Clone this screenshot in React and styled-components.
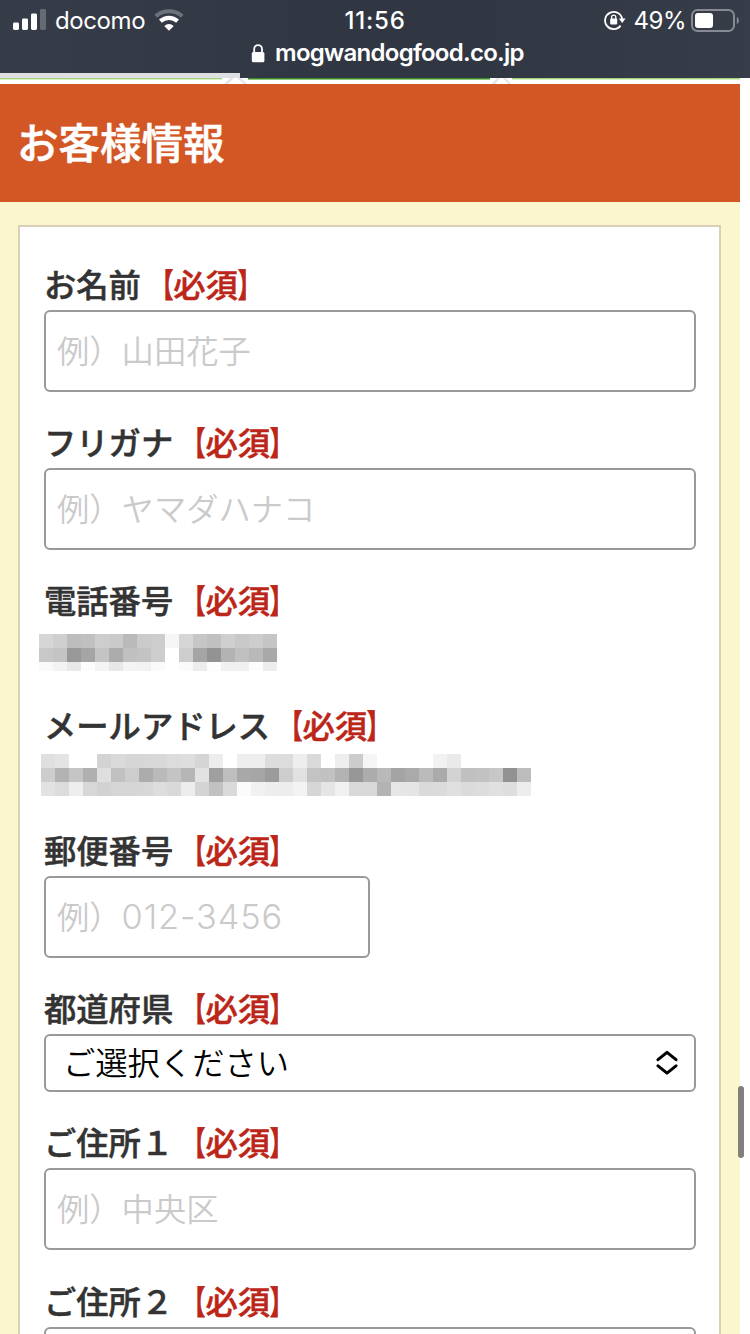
import React from "react";
import styled, { createGlobalStyle } from "styled-components";

const GlobalStyle = createGlobalStyle`
  * { box-sizing: border-box; }
  html, body { margin: 0; background: #fff; }
  body {
    width: 750px;
    height: 1334px;
    overflow: hidden;
    font-family: "Noto Sans CJK JP", sans-serif;
    color: #333;
  }
`;

const Screen = styled.div`
  position: relative;
  width: 750px;
  height: 1334px;
  overflow: hidden;
  background: #fff;
`;

const BrowserBar = styled.header`
  height: 78px;
  display: flex;
  flex-direction: column;
  background: linear-gradient(90deg, #363c48 0%, #303743 45%, #303743 60%, #363c48 100%);
  color: #fff;
  font-family: Inter, sans-serif;
`;

const StatusRow = styled.div`
  height: 40px;
  display: grid;
  grid-template-columns: 1fr auto 1fr;
  align-items: center;
  padding: 0 11px 0 13px;
`;

const StatusGroup = styled.div`
  display: flex;
  align-items: center;
  justify-content: ${(p) => (p.$end ? "flex-end" : "flex-start")};
  svg { flex: none; display: block; }
`;

const StatusText = styled.span`
  font-size: 24px;
  line-height: 38px;
  padding-top: 2px;
  font-weight: ${(p) => p.$weight || 400};
  letter-spacing: ${(p) => p.$spacing || 0}px;
  margin: ${(p) => p.$margin || "0"};
  white-space: nowrap;
`;

const AddressRow = styled.div`
  height: 33px;
  display: flex;
  align-items: flex-start;
  padding-left: 251px;
  gap: 10px;
  svg { margin-top: 4px; }
`;

const Address = styled.span`
  font-size: 24px;
  font-weight: 600;
  line-height: 26px;
  letter-spacing: -0.72px;
`;

const Progress = styled.div`
  width: 240px;
  height: 5px;
  background: #dddfe2;
`;

const Page = styled.main`
  width: 740px;
  background: #fcf6cf;
`;

const Steps = styled.div`
  height: 6px;
  display: flex;
  background: #fff;
  svg { display: block; flex: none; }
`;

const Step = styled.div`
  width: ${(p) => p.$width}px;
  border-top: 1px solid ${(p) => p.$color};
  box-shadow: inset 0 1px 0 ${(p) => p.$glow};
`;

const SectionTitle = styled.h1`
  margin: 0;
  height: 118px;
  padding-left: 17px;
  background: #d35725;
  color: #fff;
  font-size: 41.5px;
  font-weight: 500;
  -webkit-text-stroke: 0.6px #fff;
  line-height: 114px;
`;

const Card = styled.form`
  margin: 23px 19px 0 18px;
  height: 1150px;
  padding: 31px 24px 0;
  border: 2px solid #d8d1b7;
  background: #fff;
`;

const Field = styled.div`
  display: flex;
  flex-direction: column;
  height: ${(p) => p.$height}px;
`;

const Label = styled.label`
  height: 52px;
  flex: none;
  font-size: 32.3px;
  font-weight: 500;
  -webkit-text-stroke: 0.5px currentColor;
  line-height: 50px;
  white-space: nowrap;
`;

const Required = styled.span`
  color: #bb2618;
`;

const Bracket = styled.span`
  display: inline-block;
  font-weight: 900;
  -webkit-text-stroke: 0.8px currentColor;
  transform: scaleX(0.68);
  transform-origin: ${(p) => p.$side} center;
`;

const TextInput = styled.div`
  width: ${(p) => p.$width || 652}px;
  height: 82px;
  flex: none;
  display: flex;
  align-items: center;
  border: 2px solid #999;
  border-radius: 6px;
  padding: 0 11px 4px;
  background: #fff;
  color: #cacaca;
  font-size: 32.3px;
  font-weight: 350;
  line-height: 48px;
  white-space: pre;
`;

const Digits = styled.span`
  padding-top: 3px;
  font-family: Inter, sans-serif;
  font-size: 34.3px;
  font-weight: 300;
  letter-spacing: 0.9px;
`;

const SelectBox = styled.div`
  width: 652px;
  height: 58px;
  flex: none;
  display: flex;
  align-items: center;
  justify-content: space-between;
  border: 2px solid #999;
  border-radius: 6px;
  padding: 0 16px 0 17px;
  color: #000;
  font-size: 32.3px;
  font-weight: 350;
`;

const SelectValue = styled.span`
  line-height: 46px;
  padding-bottom: 4px;
`;

const Mosaic = styled.div`
  display: grid;
  grid-template-columns: repeat(${(p) => p.$columns}, 14px);
  grid-template-rows: ${(p) => p.$rows};
  margin: ${(p) => p.$margin};
`;

const Cell = styled.i`
  background: ${(p) => `#${p.$shade}${p.$shade}${p.$shade}`};
`;

const ScrollThumb = styled.div`
  position: absolute;
  right: 6px;
  top: 1086px;
  width: 6px;
  height: 72px;
  border-radius: 3px;
  background: #83807a;
`;

const PHONE = [
  "d6 cf bd c0 cd ca ba cb cd f6 d6 c6 c0 cf c8 cd c5",
  "c8 c4 99 a5 c4 ac c0 c3 cd ff cd a5 93 b3 c0 b9 a9",
  "fa f3 e9 fc f4 e7 f4 f2 fa ff fa ec fd f0 f0 fd ed",
];

const MAIL = [
  "df e4 ff ff d3 da d6 d7 d8 dc de d5 ed ff ee ee dd dc ee da ff ee cc f5 ff ff ff ff f2 ea ff ff ff ff ff",
  "cd b3 c5 b0 df c1 cd ac ba c4 b6 e2 9f be a8 a6 9b cd e1 c3 c1 b3 97 ac b9 a4 aa bb ab d3 c0 c2 c7 92 bd",
  "e2 dc ee d7 d2 d6 d6 d7 dd d9 ed d4 c1 da fb f1 ed ed f3 d6 e5 f1 d9 d9 b3 e6 e5 da db e0 db dd e1 de ed",
];

function Masked({ data, rows, margin }) {
  const cells = data.join(" ").split(" ");
  return (
    <Mosaic $columns={cells.length / data.length} $rows={rows} $margin={margin}>
      {cells.map((shade, i) => (
        <Cell key={i} $shade={shade} />
      ))}
    </Mosaic>
  );
}

function FormField({ label, height, children }) {
  return (
    <Field $height={height}>
      <Label>
        {label}
        <Required>
          <Bracket $side="right">【</Bracket>必須<Bracket $side="left">】</Bracket>
        </Required>
      </Label>
      {children}
    </Field>
  );
}

const SignalIcon = () => (
  <svg width="33" height="22" viewBox="0 0 33 22" fill="#fff">
    <rect x="0" y="13.5" width="6" height="7.5" rx="1.4" />
    <rect x="9" y="9.5" width="6" height="11.5" rx="1.4" />
    <rect x="18" y="4.5" width="6" height="16.5" rx="1.4" />
    <rect x="27" y="0" width="6" height="21" rx="1.4" opacity=".24" />
  </svg>
);

const WifiIcon = () => (
  <svg width="30" height="22" viewBox="0 0 30 22" fill="none">
    <path d="M1.8 7.2C9.2 .6 20.8 .6 28.2 7.2" stroke="#6c727c" strokeWidth="4" />
    <path d="M6.4 12.2C11.4 7.8 18.6 7.8 23.6 12.2" stroke="#fff" strokeWidth="4.2" />
    <path d="M10.4 17.2C13 14.4 17 14.4 19.6 17.2L15 21.8Z" fill="#fff" />
  </svg>
);

const RotationLockIcon = () => (
  <svg width="22" height="20" viewBox="0 0 22 20" fill="none">
    <path d="M16.6 15.6A8.6 8.6 0 1 1 18.2 9.4" stroke="#fff" strokeWidth="1.8" />
    <path d="M14.8 8.6H21.6L18.2 13Z" fill="#fff" />
    <rect x="6.2" y="8.6" width="7" height="5.8" rx=".8" fill="#fff" />
    <path d="M7.6 9V7.2a2.1 2.1 0 0 1 4.2 0V9" stroke="#fff" strokeWidth="1.3" />
  </svg>
);

const BatteryIcon = () => (
  <svg width="48" height="23" viewBox="0 0 48 23" fill="none">
    <rect x="1" y="1" width="42" height="21" rx="5.5" stroke="#858a93" strokeWidth="2" />
    <rect x="4" y="4" width="18" height="15" rx="3" fill="#fff" />
    <path d="M45.8 8c2.8 1 2.8 6 0 7Z" fill="#858a93" />
  </svg>
);

const LockIcon = () => (
  <svg width="14" height="19" viewBox="0 0 14 19" fill="none">
    <rect x=".8" y="8" width="12.6" height="10.3" rx="1.6" fill="#fff" />
    <path d="M3.2 9V5a3.9 3.9 0 0 1 7.8 0v4" stroke="#fff" strokeWidth="1.8" />
  </svg>
);

const StepArrow = ({ width }) => (
  <svg width={width} height="6" viewBox="0 0 26 6" preserveAspectRatio="none">
    <path d="M2 6L8 0H12L6 6ZM15 0H19L25 6H22Z" fill="#e6e6e6" />
  </svg>
);

const SelectArrows = () => (
  <svg width="22" height="26" viewBox="0 0 22 26" fill="none" stroke="#000" strokeWidth="3" strokeLinecap="round" strokeLinejoin="round">
    <path d="M2 9.7L11 2.3L20 9.7M2 15.8L11 23.2L20 15.8" />
  </svg>
);

export default function App() {
  return (
    <Screen>
      <GlobalStyle />
      <BrowserBar>
        <StatusRow>
          <StatusGroup>
            <SignalIcon />
            <StatusText $margin="0 9px 0 9px" $spacing={-0.4}>docomo</StatusText>
            <WifiIcon />
          </StatusGroup>
          <StatusText $weight={500} $spacing={0.8} $margin="0 2px 0 0">11:56</StatusText>
          <StatusGroup $end>
            <RotationLockIcon />
            <StatusText $margin="0 5px 0 8px" $spacing={-0.5}>49%</StatusText>
            <BatteryIcon />
          </StatusGroup>
        </StatusRow>
        <AddressRow>
          <LockIcon />
          <Address>mogwandogfood.co.jp</Address>
        </AddressRow>
        <Progress />
      </BrowserBar>
      <Page>
        <Steps>
          <Step $width={222} $color="#a2d279" $glow="#d9efc6" />
          <StepArrow width={26} />
          <Step $width={242} $color="#3d8b27" $glow="#8fc57c" />
          <StepArrow width={22} />
          <Step $width={228} $color="#a2d279" $glow="#d9efc6" />
        </Steps>
        <SectionTitle>お客様情報</SectionTitle>
        <Card>
          <FormField label="お名前" height={158}>
            <TextInput role="textbox">例）山田花子</TextInput>
          </FormField>
          <FormField label="フリガナ" height={158}>
            <TextInput role="textbox">例）ヤマダハナコ</TextInput>
          </FormField>
          <FormField label="電話番号" height={125}>
            <Masked data={PHONE} rows="14px 14px 9px" margin="8px 0 0 -5px" />
          </FormField>
          <FormField label="メールアドレス" height={125}>
            <Masked data={MAIL} rows="14px 14px 14px" margin="3px 0 0 -3px" />
          </FormField>
          <FormField label="郵便番号" height={158}>
            <TextInput role="textbox" $width={326}>
              例）<Digits>012-3456</Digits>
            </TextInput>
          </FormField>
          <FormField label="都道府県" height={134}>
            <SelectBox role="combobox">
              <SelectValue>ご選択ください</SelectValue>
              <SelectArrows />
            </SelectBox>
          </FormField>
          <FormField label="ご住所１" height={159}>
            <TextInput role="textbox">例）中央区</TextInput>
          </FormField>
          <FormField label="ご住所２" height={158}>
            <TextInput role="textbox" />
          </FormField>
        </Card>
      </Page>
      <ScrollThumb />
    </Screen>
  );
}
